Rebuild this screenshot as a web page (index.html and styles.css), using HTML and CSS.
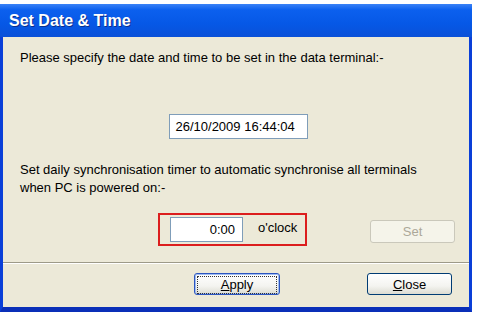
FILE: index.html
```html
<!DOCTYPE html>
<html lang="en">
<head>
    <meta charset="UTF-8">
    <title>Set Date &amp; Time</title>
    <link rel="stylesheet" href="styles.css">
</head>
<body>

    <!-- Dialog window -->
    <div class="window">
        <div class="title-bar">Set Date &amp; Time</div>

        <div class="client">
            <p class="intro">Please specify the date and time to be set in the data terminal:-</p>

            <div class="date-row">
                <div class="field date-field">26/10/2009 16:44:04</div>
            </div>

            <p class="sync-text">Set daily synchronisation timer to automatic synchronise all terminals<br>when PC is powered on:-</p>

            <div class="timer-row">
                <div class="highlight">
                    <div class="field time-field">0:00</div>
                    <span class="oclock">o'clock</span>
                </div>
                <button class="xp-btn" disabled>Set</button>
            </div>

            <div class="separator"></div>

            <div class="action-row">
                <button class="xp-btn default-btn"><span class="focus"><u>A</u>pply</span></button>
                <button class="xp-btn"><u>C</u>lose</button>
            </div>
        </div>
    </div>

</body>
</html>
```

FILE: styles.css
```css
body {
    margin: 0;
    background: white;
    font-family: "Liberation Sans", Arial, sans-serif;
    font-size: 13px;
    color: #000;
}

.window {
    width: 466px;
    margin-top: 4px;
    border-left: 3px solid #0a3fd8;
    border-right: 3px solid #0a3fd8;
    border-bottom: 5px solid #0a2fb8;
    background: #ece9d8;
}

.title-bar {
    height: 33px;
    margin-left: -3px;
    margin-right: -3px;
    padding-left: 9px;
    background: linear-gradient(to bottom, #3a82f6 0%, #0c60ee 18%, #0658e6 60%, #0a50d8 100%);
    color: white;
    font-weight: bold;
    font-size: 16px;
    line-height: 34px;
    text-shadow: 1px 1px 0 #0b2f8c;
}

.client {
    height: 270px;
    display: flex;
    flex-direction: column;
}

.intro {
    margin: 13px 0 0 17px;
    line-height: 16px;
}

.date-row {
    display: flex;
    justify-content: center;
    margin-top: 48px;
    padding-left: 4px;
}

.field {
    background: white;
    border: 1px solid #7f9db9;
    box-sizing: border-box;
}

.date-field {
    width: 139px;
    height: 25px;
    line-height: 23px;
    padding-left: 6px;
}

.sync-text {
    margin: 22px 0 0 17px;
    line-height: 18px;
}

.timer-row {
    display: flex;
    align-items: center;
    margin-top: 16px;
    height: 33px;
}

.highlight {
    display: flex;
    align-items: center;
    width: 149px;
    height: 33px;
    margin-left: 155px;
    border: 2px solid #dc1e1e;
    box-sizing: border-box;
}

.time-field {
    width: 73px;
    height: 25px;
    margin-left: 10px;
    line-height: 24px;
    text-align: right;
    padding-right: 7px;
}

.oclock {
    margin-left: 15px;
    margin-top: -4px;
}

.xp-btn {
    width: 85px;
    height: 23px;
    padding: 0;
    border: 1px solid #003c74;
    border-radius: 3px;
    background: linear-gradient(to bottom, #ffffff 0%, #f4f4f0 60%, #dcdcd2 100%);
    font-family: "Liberation Sans", Arial, sans-serif;
    font-size: 13px;
    color: #000;
}

.xp-btn:disabled {
    border-color: #cac8bb;
    background: #f5f4ea;
    color: #aca899;
}

.timer-row .xp-btn {
    margin-left: 63px;
    margin-top: 4px;
}

.separator {
    margin-top: 16px;
    height: 1px;
    background: #9d9a88;
    border-bottom: 1px solid #ffffff;
}

.action-row {
    display: flex;
    margin-top: 9px;
}

.action-row .xp-btn {
    height: 22px;
}

.default-btn {
    margin-left: 191px;
    width: 86px;
    border-color: #2b55c0;
    box-shadow: inset 0 0 0 1px #a0bcf0;
}

.default-btn + .xp-btn {
    margin-left: 87px;
}

.focus {
    display: block;
    margin: 2px;
    height: 16px;
    line-height: 16px;
    border: 1px dotted #333;
}
```
